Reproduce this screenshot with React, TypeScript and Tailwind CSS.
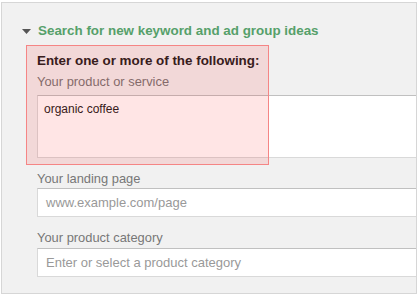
export default function App() {
  return (
    <div className="relative w-[419px] h-[295px] bg-white font-['Liberation_Sans',Arial,sans-serif]">
      <div className="absolute left-[1px] top-[2px] w-[416px] h-[292px] border border-[#d6d6d6] bg-[#f1f1f1] overflow-hidden">
        <div className="flex items-center pl-[20px] pt-[20px] h-[36px]">
          <svg width="9" height="5" viewBox="0 0 9 5" className="mr-[7px]">
            <path d="M0 0h9L4.5 5z" fill="#555" />
          </svg>
          <span className="text-[13.4px] font-bold text-[#56a06a] leading-4">
            Search for new keyword and ad group ideas
          </span>
        </div>

        <div className="pl-[35px] pt-[14px] flex flex-col">
          <div className="text-[13.4px] font-bold text-[#222] leading-4">
            Enter one or more of the following:
          </div>
          <div className="mt-[5px] text-[12.9px] text-[#777] leading-4">Your product or service</div>
          <div className="mt-[5px] w-[420px] h-[63px] bg-white border border-[#d9d9d9] border-t-[#c0c0c0] px-[6px] pt-[5px] text-[12px] text-[#222] leading-4">
            organic coffee
          </div>

          <div className="mt-[13px] text-[12.9px] text-[#777] leading-4">Your landing page</div>
          <div className="mt-[1px] w-[420px] h-[29px] bg-white border border-[#d9d9d9] border-t-[#c0c0c0] flex items-center px-[8px] text-[13px] text-[#999]">
            www.example.com/page
          </div>

          <div className="mt-[13px] text-[12.9px] text-[#777] leading-4">Your product category</div>
          <div className="mt-[2px] w-[420px] h-[29px] bg-white border border-[#d9d9d9] border-t-[#c0c0c0] flex items-center px-[8px] text-[13px] text-[#999]">
            Enter or select a product category
          </div>
        </div>
      </div>

      <div className="absolute left-[26px] top-[45px] w-[243px] h-[120px] border border-[#f58585] bg-[rgba(255,0,0,0.1)]" />
    </div>
  );
}
